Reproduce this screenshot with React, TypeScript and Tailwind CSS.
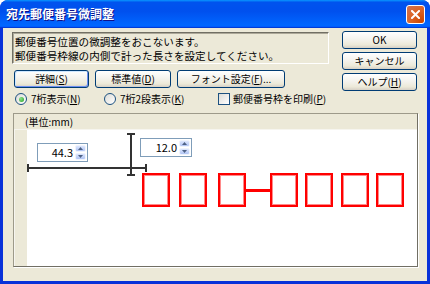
import { clsx } from "clsx";
import type { ReactNode } from "react";

const FONT = "font-['Noto_Sans_CJK_JP','Liberation_Sans',sans-serif]";

// ニーモニック文字（下線付き）
function Mn({ children }: { children: ReactNode }) {
  return <span className="underline underline-offset-[1px]">{children}</span>;
}

function XpButton({
  children,
  className,
  focused,
}: {
  children: ReactNode;
  className?: string;
  focused?: boolean;
}) {
  return (
    <button
      type="button"
      className={clsx(
        "h-[18px] rounded-[3px] border border-[#003c74] bg-[linear-gradient(180deg,#ffffff,#f4f3ee_45%,#ece9d8_80%,#d6d0c5)] text-[10px] leading-none text-black flex items-center justify-center",
        focused && "shadow-[inset_-1px_-1px_#6c8ef0,inset_1px_1px_#cee7ff]",
        className
      )}
    >
      {children}
    </button>
  );
}

function Radio({ checked, children, className }: { checked?: boolean; children: ReactNode; className?: string }) {
  return (
    <div className={clsx("flex items-center gap-[4px]", className)}>
      <span className="w-[12px] h-[12px] rounded-full border border-[#1c5180] bg-[linear-gradient(135deg,#dcdcd7,#ffffff)] flex items-center justify-center">
        {checked && <span className="w-[5px] h-[5px] rounded-full bg-[radial-gradient(circle_at_35%_35%,#8ee28c,#21a121)]" />}
      </span>
      <span className="text-[10px] leading-none">{children}</span>
    </div>
  );
}

function Spinner({ value, className }: { value: string; className: string }) {
  return (
    <div className={clsx("absolute h-[19px] border border-[#7f9db9] bg-white flex", className)}>
      <span className="flex-1 text-right pr-[2px] text-[11px] leading-[17px]">{value}</span>
      <div className="w-[12px] flex flex-col gap-[1px] p-[1px] pl-0">
        <span className="flex-1 rounded-[2px] border border-[#eef3fd] bg-[linear-gradient(180deg,#dce6fd,#b0c4f4)] flex items-center justify-center">
          <svg width="5" height="3" viewBox="0 0 5 3"><path d="M0 3 L2.5 0 L5 3Z" fill="#4d6185" /></svg>
        </span>
        <span className="flex-1 rounded-[2px] border border-[#eef3fd] bg-[linear-gradient(180deg,#dce6fd,#b0c4f4)] flex items-center justify-center">
          <svg width="5" height="3" viewBox="0 0 5 3"><path d="M0 0 L2.5 3 L5 0Z" fill="#4d6185" /></svg>
        </span>
      </div>
    </div>
  );
}

const BOX_LEFT = ["left-[115px]", "left-[152px]", "left-[191px]", "left-[243px]", "left-[278px]", "left-[314px]", "left-[349px]"];

export default function App() {
  return (
    <div className={clsx("w-[430px] h-[284px] flex flex-col bg-[#0831d9] rounded-t-[8px] overflow-hidden text-black", FONT)}>
      {/* タイトルバー */}
      <div className="h-[28px] shrink-0 flex items-center pl-[6px] pr-[5px] bg-[linear-gradient(180deg,#0997ff,#0053ee_8%,#0050ee_40%,#0066ff_88%,#0066ff_93%,#005bff_95%,#003dd7_96%,#003dd7)]">
        <span className="text-white text-[12px] font-bold leading-none [text-shadow:1px_1px_#0f1089]">宛先郵便番号微調整</span>
        <div className="ml-auto w-[19px] h-[19px] rounded-[3px] border border-white bg-[radial-gradient(circle_at_90%_90%,#cc4600,#dc6527_55%,#cd7358)] flex items-center justify-center">
          <svg width="9" height="9" viewBox="0 0 9 9">
            <path d="M1 1 L8 8 M8 1 L1 8" stroke="white" strokeWidth="2" strokeLinecap="square" />
          </svg>
        </div>
      </div>

      {/* 本体 */}
      <div className="flex-1 mx-[3px] mb-[3px] bg-[#ece9d8] flex flex-col">
        <div className="h-[85px] shrink-0 flex pt-[4px]">
          <div className="ml-[9px] w-[317px] flex flex-col">
            <div className="h-[32px] border border-[#716f64] border-b-white border-r-white shadow-[inset_1px_1px_#aca899] px-[2px] pt-[2px] text-[10.6px] leading-[14px]">
              <div>郵便番号位置の微調整をおこないます。</div>
              <div>郵便番号枠線の内側で計った長さを設定してください。</div>
            </div>
            <div className="mt-[6px] ml-[2px] flex gap-[6px]">
              <XpButton focused className="w-[75px]">詳細(<Mn>S</Mn>)</XpButton>
              <XpButton className="w-[76px]">標準値(<Mn>D</Mn>)</XpButton>
              <XpButton className="w-[108px]">フォント設定(<Mn>F</Mn>)...</XpButton>
            </div>
            <div className="mt-[4px] h-[14px] flex items-center">
              <Radio checked className="ml-[3px] w-[89px]">7桁表示(<Mn>N</Mn>)</Radio>
              <Radio className="w-[114px]">7桁2段表示(<Mn>K</Mn>)</Radio>
              <div className="flex items-center gap-[3px]">
                <span className="w-[12px] h-[12px] border border-[#1c5180] bg-[linear-gradient(135deg,#dcdcd7,#ffffff)]" />
                <span className="text-[10px] leading-none">郵便番号枠を印刷(<Mn>P</Mn>)</span>
              </div>
            </div>
          </div>
          <div className="ml-auto mr-[10px] -mt-[1px] w-[75px] flex flex-col gap-[3px]">
            <XpButton className="w-[75px]">OK</XpButton>
            <XpButton className="w-[75px]">キャンセル</XpButton>
            <XpButton className="w-[75px]">ヘルプ(<Mn>H</Mn>)</XpButton>
          </div>
        </div>

        {/* 調整パネル */}
        <div className="ml-[10px] mr-[9px] h-[154px] border border-[#9d9a8a] border-b-[#716f64] border-r-[#716f64] shadow-[1px_1px_#ffffff] flex flex-col">
          <div className="h-[16px] shrink-0 border-b border-[#f6f5ef] pl-[11px] flex items-center text-[10px] leading-none">
            (単位:mm)
          </div>
          <div className="flex-1 flex">
            <div className="w-[13px] border-l border-[#f6f5ef]" />
            <div className="flex-1 relative bg-white">
              <Spinner value="44.3" className="left-[10px] top-[13px] w-[51px]" />
              <Spinner value="12.0" className="left-[113px] top-[8px] w-[52px]" />

              {/* 横方向の寸法線 */}
              <div className="absolute left-0 top-[37px] w-[120px] h-[2px] bg-[#333333]" />
              <div className="absolute left-0 top-[34px] w-[2px] h-[8px] bg-[#333333]" />
              <div className="absolute left-[118px] top-[34px] w-[2px] h-[8px] bg-[#333333]" />

              {/* 縦方向の寸法線 */}
              <div className="absolute left-[103px] top-[3px] w-[2px] h-[43px] bg-[#333333]" />
              <div className="absolute left-[100px] top-[3px] w-[8px] h-[2px] bg-[#333333]" />
              <div className="absolute left-[100px] top-[44px] w-[8px] h-[2px] bg-[#333333]" />

              {/* 郵便番号枠 */}
              {BOX_LEFT.map((l) => (
                <div
                  key={l}
                  className={clsx(
                    "absolute top-[43px] w-[28px] h-[34px] border-2 border-[#ff0000] shadow-[inset_0_0_0_1px_#ff8a8a]",
                    l
                  )}
                />
              ))}
              <div className="absolute left-[219px] top-[59px] w-[24px] h-[3px] bg-[#ff0000]" />
            </div>
          </div>
        </div>
      </div>
    </div>
  );
}
